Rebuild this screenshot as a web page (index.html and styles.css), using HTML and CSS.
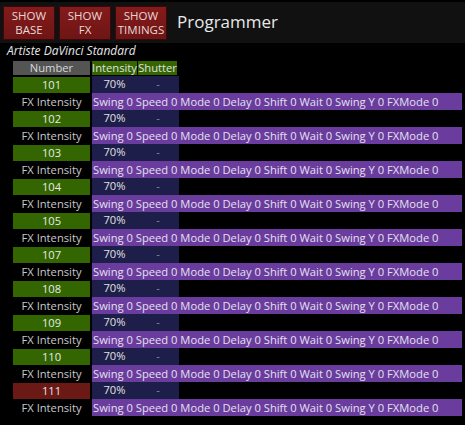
FILE: index.html
```html
<!DOCTYPE html>
<html>
<head>
<meta charset="utf-8">
<link rel="stylesheet" href="styles.css">
</head>
<body>
<div class="topbar">
  <div class="btn"><span>SHOW</span><span>BASE</span></div>
  <div class="btn"><span>SHOW</span><span>FX</span></div>
  <div class="btn"><span>SHOW</span><span>TIMINGS</span></div>
  <div class="title">Programmer</div>
</div>
<div class="fixture">Artiste DaVinci Standard</div>
<div class="table">
  <div class="hrow">
    <div class="hnum">Number</div>
    <div class="hint">Intensity</div>
    <div class="hshut">Shutter</div>
  </div>
  <div class="row"><div class="num">101</div><div class="vals"><span class="int">70%</span><span class="shut">-</span></div></div>
  <div class="row"><div class="fxl">FX Intensity</div><div class="fx">Swing 0 Speed 0 Mode 0 Delay 0 Shift 0 Wait 0 Swing Y 0 FXMode 0</div></div>
  <div class="row"><div class="num">102</div><div class="vals"><span class="int">70%</span><span class="shut">-</span></div></div>
  <div class="row"><div class="fxl">FX Intensity</div><div class="fx">Swing 0 Speed 0 Mode 0 Delay 0 Shift 0 Wait 0 Swing Y 0 FXMode 0</div></div>
  <div class="row"><div class="num">103</div><div class="vals"><span class="int">70%</span><span class="shut">-</span></div></div>
  <div class="row"><div class="fxl">FX Intensity</div><div class="fx">Swing 0 Speed 0 Mode 0 Delay 0 Shift 0 Wait 0 Swing Y 0 FXMode 0</div></div>
  <div class="row"><div class="num">104</div><div class="vals"><span class="int">70%</span><span class="shut">-</span></div></div>
  <div class="row"><div class="fxl">FX Intensity</div><div class="fx">Swing 0 Speed 0 Mode 0 Delay 0 Shift 0 Wait 0 Swing Y 0 FXMode 0</div></div>
  <div class="row"><div class="num">105</div><div class="vals"><span class="int">70%</span><span class="shut">-</span></div></div>
  <div class="row"><div class="fxl">FX Intensity</div><div class="fx">Swing 0 Speed 0 Mode 0 Delay 0 Shift 0 Wait 0 Swing Y 0 FXMode 0</div></div>
  <div class="row"><div class="num">107</div><div class="vals"><span class="int">70%</span><span class="shut">-</span></div></div>
  <div class="row"><div class="fxl">FX Intensity</div><div class="fx">Swing 0 Speed 0 Mode 0 Delay 0 Shift 0 Wait 0 Swing Y 0 FXMode 0</div></div>
  <div class="row"><div class="num">108</div><div class="vals"><span class="int">70%</span><span class="shut">-</span></div></div>
  <div class="row"><div class="fxl">FX Intensity</div><div class="fx">Swing 0 Speed 0 Mode 0 Delay 0 Shift 0 Wait 0 Swing Y 0 FXMode 0</div></div>
  <div class="row"><div class="num">109</div><div class="vals"><span class="int">70%</span><span class="shut">-</span></div></div>
  <div class="row"><div class="fxl">FX Intensity</div><div class="fx">Swing 0 Speed 0 Mode 0 Delay 0 Shift 0 Wait 0 Swing Y 0 FXMode 0</div></div>
  <div class="row"><div class="num">110</div><div class="vals"><span class="int">70%</span><span class="shut">-</span></div></div>
  <div class="row"><div class="fxl">FX Intensity</div><div class="fx">Swing 0 Speed 0 Mode 0 Delay 0 Shift 0 Wait 0 Swing Y 0 FXMode 0</div></div>
  <div class="row"><div class="num sel">111</div><div class="vals"><span class="int">70%</span><span class="shut">-</span></div></div>
  <div class="row"><div class="fxl">FX Intensity</div><div class="fx">Swing 0 Speed 0 Mode 0 Delay 0 Shift 0 Wait 0 Swing Y 0 FXMode 0</div></div>
</div>
</body>
</html>
```
FILE: styles.css
```css
html, body {
  margin: 0;
  padding: 0;
  background: #000;
  font-family: "Open Sans", "Noto Sans", sans-serif;
  color: #e0e0e0;
  overflow: hidden;
}
.topbar {
  margin-top: 2px;
  height: 41px;
  background: #111111;
  display: flex;
  align-items: center;
  padding-left: 3px;
  gap: 4px;
  box-sizing: border-box;
}
.btn {
  width: 52px;
  height: 34px;
  box-sizing: border-box;
  background: linear-gradient(#851b1b, #6e1515);
  border: 1px solid #3a0808;
  color: #e8d8d8;
  font-size: 11.5px;
  display: flex;
  flex-direction: column;
  align-items: center;
  justify-content: center;
  gap: 0;
}
.btn span {
  display: block;
  height: 14px;
  line-height: 14px;
}
.title {
  margin-left: 6px;
  font-size: 17px;
  color: #e8e8e8;
  margin-top: -2px;
}
.fixture {
  font-style: italic;
  font-size: 12px;
  color: #e6e6e6;
  padding-left: 7px;
  height: 17px;
  line-height: 15px;
}
.table {
  padding-left: 13px;
}
.hrow {
  display: flex;
  height: 16px;
  padding-top: 1px;
  box-sizing: border-box;
  font-size: 11.2px;
  line-height: 14px;
}
.hnum {
  width: 77px;
  height: 14px;
  background: #545454;
  color: #d8d8d8;
  text-align: center;
}
.hint {
  margin-left: 2px;
  width: 45px;
  height: 14px;
  background: #336600;
  color: #e0e0e0;
  text-align: center;
}
.hshut {
  margin-left: 1px;
  width: 39px;
  height: 14px;
  background: #336600;
  color: #e0e0e0;
  text-align: center;
}
.row {
  display: flex;
  height: 17px;
  font-size: 11.2px;
  line-height: 16px;
}
.num {
  width: 77px;
  height: 16px;
  margin-top: 1px;
  background: #336600;
  color: #e8e8e8;
  text-align: center;
  line-height: 15px;
}
.num.sel {
  background: #6b1915;
}
.fxl {
  width: 77px;
  color: #c8c8c8;
  text-align: center;
  line-height: 17px;
}
.vals {
  margin-left: 2px;
  width: 87px;
  background: #1e1e4a;
  display: flex;
}
.int {
  width: 45px;
  text-align: center;
  color: #e0e0e0;
}
.shut {
  width: 42px;
  text-align: center;
  color: #8a8aa0;
}
.fx {
  margin-left: 2px;
  width: 369px;
  background: #6a3c9e;
  color: #e4e0ee;
  padding-left: 1px;
  white-space: nowrap;
  overflow: hidden;
  line-height: 17px;
}
```
